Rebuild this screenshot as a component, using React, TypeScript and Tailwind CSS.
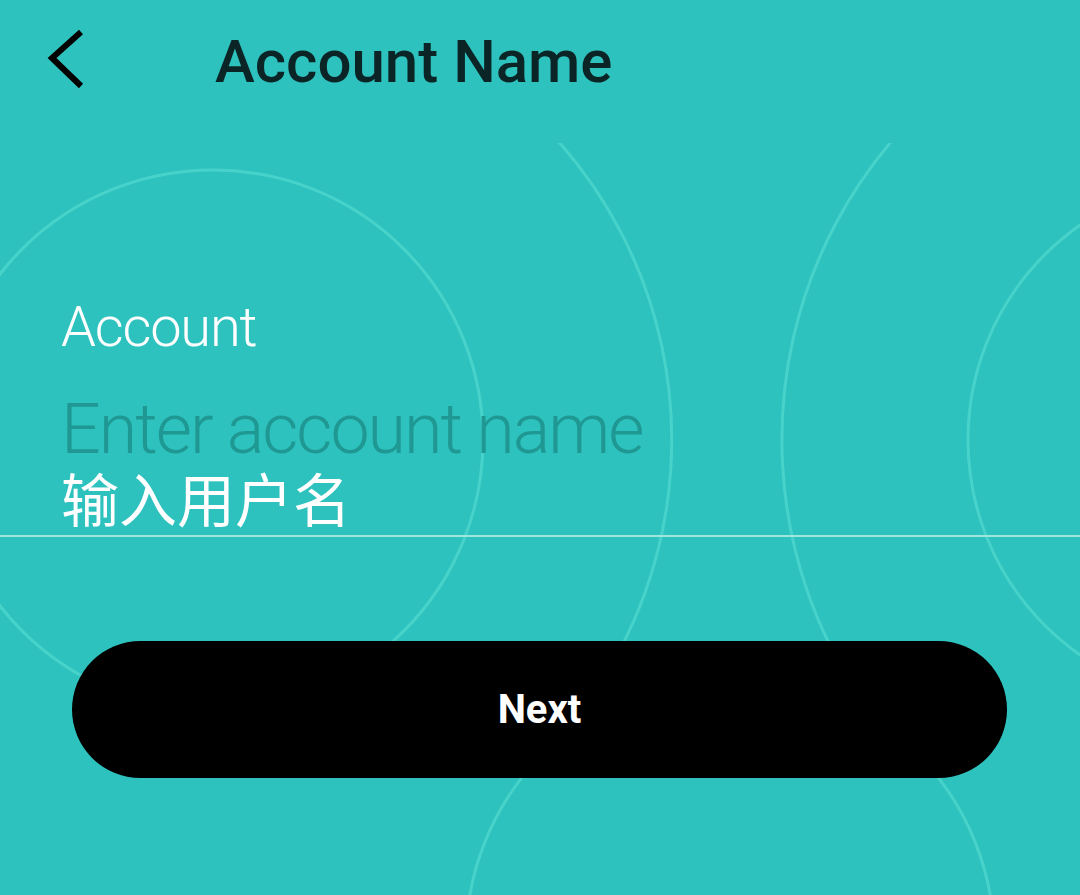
import React from 'react';

const sans = { fontFamily: 'Roboto, "Noto Sans CJK SC", sans-serif' };

// decorative rings behind the form
const Rings = () => (
  <svg
    className="absolute left-0 top-[143px] pointer-events-none"
    width="1080"
    height="752"
    viewBox="0 143 1080 752"
    fill="none"
  >
    <g stroke="#47d3ca" strokeWidth="3">
      <circle cx="213" cy="440" r="270" />
      <path d="M 222 -10 A 450 450 0 0 1 589 700" />
      <path d="M 1244 -22 A 462 462 0 0 0 862 700" />
      <circle cx="1230" cy="440" r="262" />
      <circle cx="730" cy="940" r="264" />
    </g>
  </svg>
);

const BackButton = () => (
  <button className="ml-[44px] mt-[28px] w-[42px] h-[62px] flex items-start" aria-label="Back">
    <svg width="42" height="62" viewBox="0 0 42 62" fill="none">
      <polyline points="37,4 8,30 37,58" stroke="#000" strokeWidth="6" strokeLinejoin="miter" />
    </svg>
  </button>
);

export default function App() {
  return (
    <div className="relative w-[1080px] h-[895px] overflow-hidden bg-[#2ec2be]" style={sans}>
      <Rings />
      <div className="relative flex flex-col">
        <header className="flex items-start h-[120px]">
          <BackButton />
          <h1 className="ml-[129px] mt-[32px] text-[60px] leading-[60px] font-medium text-[#0b2526]">
            Account Name
          </h1>
        </header>

        <div className="mt-[179px] flex flex-col border-b-2 border-[#9fe6df] pb-[3px]">
          <label className="pl-[61px] text-[56px] leading-[56px] font-light tracking-[-1.2px] text-white">
            Account
          </label>
          <div className="mt-[39px] pl-[61px] text-[70px] leading-[70px] font-light tracking-[-2px] text-[#1f9893]">
            Enter account name
          </div>
          <div className="mt-[9px] pl-[61px] text-[58px] leading-[59px] text-white">输入用户名</div>
        </div>

        <button className="mt-[104px] ml-[72px] w-[935px] h-[137px] rounded-full bg-black flex items-center justify-center">
          <span className="text-[40px] font-bold text-white">Next</span>
        </button>
      </div>
    </div>
  );
}
